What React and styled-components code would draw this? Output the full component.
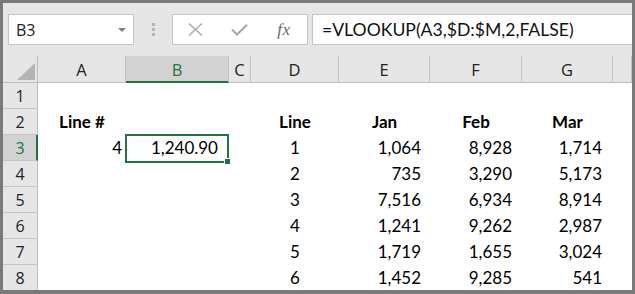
import React from 'react';
import styled, { createGlobalStyle } from 'styled-components';

const GREEN = '#217346';

const Global = createGlobalStyle`
  html, body { margin: 0; padding: 0; background: #fff; }
  * { box-sizing: border-box; }
`;

const Frame = styled.div`
  width: 635px;
  height: 294px;
  border: solid #7a7a7a;
  border-width: 3px 3px 4px 3px;
  overflow: hidden;
  background: #fff;
  font-family: Lato, "Liberation Sans", sans-serif;
`;

const FormulaArea = styled.div`
  height: 53px;
  background: #e6e6e6;
  display: flex;
  align-items: flex-start;
  padding: 11px 0 0 5px;
`;

const NameBox = styled.div`
  width: 126px;
  height: 31px;
  background: #fff;
  border: 1px solid #c6c6c6;
  display: flex;
  align-items: center;
  justify-content: space-between;
  padding: 0 7px 0 7px;
  font-family: "Open Sans", "Noto Sans", sans-serif;
  font-size: 16px;
  color: #222;
`;

const DropArrow = styled.span`
  width: 0;
  height: 0;
  border-left: 4px solid transparent;
  border-right: 4px solid transparent;
  border-top: 4px solid #808080;
`;

const Grip = styled.div`
  width: 38px;
  height: 31px;
  display: flex;
  flex-direction: column;
  align-items: center;
  justify-content: center;
  gap: 2px;

  span {
    width: 3px;
    height: 3px;
    background: #b4b4b4;
  }
`;

const FxBox = styled.div`
  width: 136px;
  height: 31px;
  background: #fff;
  border: 1px solid #c6c6c6;
  display: flex;
  align-items: center;
  padding: 0 0 0 14px;
`;

const FxButton = styled.div`
  width: ${p => p.w}px;
  display: flex;
  align-items: center;
  justify-content: center;
`;

const FxText = styled.span`
  font-family: "Liberation Serif", serif;
  font-style: italic;
  font-size: 17px;
  color: #6a6a6a;
  letter-spacing: 0.5px;
`;

const FormulaInput = styled.div`
  flex: 1;
  height: 31px;
  margin-left: 4px;
  background: #fff;
  border: 1px solid #c6c6c6;
  border-right: none;
  display: flex;
  align-items: center;
  padding-left: 9px;
  font-family: Lato, "Liberation Sans", sans-serif;
  font-size: 17.6px;
  color: #111;
`;

const Sheet = styled.div`
  display: grid;
  grid-template-columns: 35px 88px 103px 22px 88px 91px 92px 91px 1fr;
  grid-template-rows: 27px;
  grid-auto-rows: 26px;
`;

const ColHead = styled.div`
  background: ${p => (p.active ? '#d2d2d2' : '#e6e6e6')};
  color: ${p => (p.active ? GREEN : '#222')};
  border-right: 1px solid #c4c4c4;
  border-bottom: ${p => (p.active ? `2px solid ${GREEN}` : '1px solid #bdbdbd')};
  display: flex;
  align-items: center;
  justify-content: center;
  font-family: "Open Sans", "Noto Sans", sans-serif;
  font-size: 16.5px;
  padding-top: 1px;
`;

const Corner = styled.div`
  background: #e6e6e6;
  border-right: 1px solid #bdbdbd;
  border-bottom: 1px solid #bdbdbd;
  display: flex;
  align-items: flex-end;
  justify-content: flex-end;
  padding: 0 2px 2px 0;
`;

const RowHead = styled.div`
  background: ${p => (p.active ? '#d2d2d2' : '#e6e6e6')};
  color: ${p => (p.active ? GREEN : '#222')};
  border-right: ${p => (p.active ? `2px solid ${GREEN}` : '1px solid #bdbdbd')};
  border-bottom: 1px solid #c6c6c6;
  display: flex;
  align-items: center;
  justify-content: center;
  font-family: "Open Sans", "Noto Sans", sans-serif;
  font-size: 16px;
  padding-left: ${p => (p.active ? '1px' : '0')};
`;

const Cell = styled.div`
  position: relative;
  display: flex;
  align-items: flex-end;
  justify-content: ${p => p.align || 'flex-end'};
  padding: 0 ${p => p.pad ?? 4}px 3px 4px;
  font-size: 17px;
  font-weight: ${p => (p.bold ? 700 : 400)};
  color: #000;
  white-space: nowrap;
`;

// green box round the active cell, with the fill handle at its corner
const Selection = styled.div`
  position: absolute;
  left: -1px;
  top: -1px;
  right: 0;
  bottom: -2px;
  border: 2px solid ${GREEN};
  pointer-events: none;

  &::after {
    content: '';
    position: absolute;
    right: -4px;
    bottom: -4px;
    width: 5px;
    height: 5px;
    background: ${GREEN};
    border: 1px solid #fff;
  }
`;

const cols = ['A', 'B', 'C', 'D', 'E', 'F', 'G', ''];
const pads = [4, 11, 4, 4, 9, 10, 11, 4];

const rows = [
  [],
  [{ t: 'Line #', b: 1, c: 1 }, null, null, { t: 'Line', b: 1, c: 1 }, { t: 'Jan', b: 1, c: 1 }, { t: 'Feb', b: 1, c: 1 }, { t: 'Mar', b: 1, c: 1 }],
  [{ t: '4' }, { t: '1,240.90', sel: 1 }, null, { t: '1', c: 1 }, { t: '1,064' }, { t: '8,928' }, { t: '1,714' }],
  [null, null, null, { t: '2', c: 1 }, { t: '735' }, { t: '3,290' }, { t: '5,173' }],
  [null, null, null, { t: '3', c: 1 }, { t: '7,516' }, { t: '6,934' }, { t: '8,914' }],
  [null, null, null, { t: '4', c: 1 }, { t: '1,241' }, { t: '9,262' }, { t: '2,987' }],
  [null, null, null, { t: '5', c: 1 }, { t: '1,719' }, { t: '1,655' }, { t: '3,024' }],
  [null, null, null, { t: '6', c: 1 }, { t: '1,452' }, { t: '9,285' }, { t: '541' }],
];

export default function App() {
  return (
    <>
      <Global />
      <Frame>
        <FormulaArea>
          <NameBox>
            B3
            <DropArrow />
          </NameBox>
          <Grip>
            <span />
            <span />
            <span />
          </Grip>
          <FxBox>
            <FxButton w={17}>
              <svg width="15" height="13" viewBox="0 0 15 13">
                <path d="M1 0.5 L14 12.5 M14 0.5 L1 12.5" stroke="#a8a8a8" strokeWidth="1.4" fill="none" />
              </svg>
            </FxButton>
            <FxButton w={70}>
              <svg width="17" height="12" viewBox="0 0 17 12">
                <path d="M1 5.5 L6 10.5 L16 0.8" stroke="#a8a8a8" strokeWidth="2" fill="none" />
              </svg>
            </FxButton>
            <FxButton w={20}>
              <FxText>fx</FxText>
            </FxButton>
          </FxBox>
          <FormulaInput>=VLOOKUP(A3,$D:$M,2,FALSE)</FormulaInput>
        </FormulaArea>
        <Sheet>
          <Corner>
            <svg width="18" height="17" viewBox="0 0 18 17">
              <polygon points="18,0 18,17 0,17" fill="#b4b4b4" />
            </svg>
          </Corner>
          {cols.map((c, i) => (
            <ColHead key={i} active={c === 'B'}>{c}</ColHead>
          ))}
          {rows.map((r, ri) => (
            <React.Fragment key={ri}>
              <RowHead active={ri === 2}>{ri + 1}</RowHead>
              {cols.map((_, ci) => {
                const v = r[ci];
                return (
                  <Cell
                    key={ci}
                    align={v && v.c ? 'center' : 'flex-end'}
                    pad={v && v.c ? 4 : pads[ci]}
                    bold={v && v.b}
                  >
                    {v ? v.t : ''}
                    {v && v.sel ? <Selection /> : null}
                  </Cell>
                );
              })}
            </React.Fragment>
          ))}
        </Sheet>
      </Frame>
    </>
  );
}
